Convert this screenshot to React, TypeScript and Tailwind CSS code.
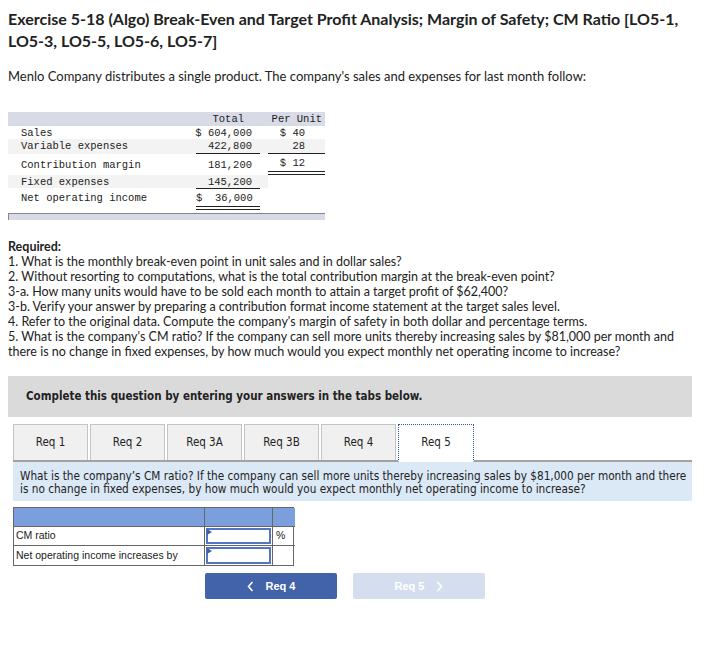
import React from 'react';

const mono = "font-['Liberation_Mono',monospace]";
const tahoma = "font-['DejaVu_Sans_Condensed','DejaVu_Sans',sans-serif]";
const arial = "font-['Liberation_Sans',Arial,sans-serif]";

const Chevron = ({ dir }: { dir: 'left' | 'right' }) => (
    <svg width="7" height="11" viewBox="0 0 7 11" fill="none" stroke="currentColor" strokeWidth={1.6}>
        {dir === 'left' ? <path d="M5.5 1L1.5 5.5L5.5 10" /> : <path d="M1.5 1L5.5 5.5L1.5 10" />}
    </svg>
);

const InputCell = () => (
    <div className="relative h-full p-px">
        <div className="h-full border-2 border-[#5276c2] bg-white" />
        <span className="absolute left-[2px] top-[2px] h-0 w-0 border-t-[3px] border-b-[3px] border-l-[5px] border-t-transparent border-b-transparent border-l-[#3b5fb0]" />
    </div>
);

export default function App() {
    const tabs = ['Req 1', 'Req 2', 'Req 3A', 'Req 3B', 'Req 4', 'Req 5'];

    return (
        <div className="w-[715px] min-h-[652px] bg-white px-2 pt-[8px] text-[#222]">
            <h1 className="font-['Lato',sans-serif] text-[16px] font-bold leading-[22px]">
                Exercise 5-18 (Algo) Break-Even and Target Profit Analysis; Margin of Safety; CM Ratio [LO5-1, LO5-3, LO5-5, LO5-6, LO5-7]
            </h1>
            <p className="mt-[15px] font-['Lato',sans-serif] text-[13px] leading-[18px]">
                Menlo Company distributes a single product. The company's sales and expenses for last month follow:
            </p>

            {/* income statement */}
            <div className={`mt-[27px] w-[317px] ${mono} text-[10.5px] leading-[12px]`}>
                <div className="grid h-[14px] grid-cols-[185px_67px_8px_57px] items-center bg-[#d8dbe6]">
                    <div />
                    <div className="pr-[16px] text-right">Total</div>
                    <div />
                    <div className="pr-[3px] text-right">Per Unit</div>
                </div>
                <div className="grid h-[13px] grid-cols-[185px_67px_8px_57px] items-center">
                    <div className="pl-[13px]">Sales</div>
                    <div className="whitespace-pre pr-[8px] text-right">$ 604,000</div>
                    <div />
                    <div className="whitespace-pre pr-[20px] text-right">$ 40</div>
                </div>
                <div className="grid h-[15px] grid-cols-[185px_67px_8px_57px] bg-[#f3f3f3]">
                    <div className="pl-[13px] pt-px">Variable expenses</div>
                    <div className="ml-[3px] border-b border-[#222] pr-[8px] pt-px text-right">422,800</div>
                    <div />
                    <div className="border-b border-[#222] pr-[20px] pt-px text-right">28</div>
                </div>
                <div className="grid h-[21px] grid-cols-[185px_67px_8px_57px] items-start">
                    <div className="pl-[13px] pt-[5px]">Contribution margin</div>
                    <div className="pr-[8px] pt-[5px] text-right">181,200</div>
                    <div />
                    <div className="h-[21px] border-b-[4px] border-double border-[#222] pr-[20px] pt-[3px] text-right whitespace-pre">$ 12</div>
                </div>
                <div className="grid h-[13px] grid-cols-[185px_67px_8px_57px] bg-[#f3f3f3]">
                    <div className="pl-[13px] pt-px">Fixed expenses</div>
                    <div className="ml-[3px] border-b border-[#222] pr-[8px] pt-px text-right">145,200</div>
                    <div />
                    <div className="bg-white" />
                </div>
                <div className="grid h-[22px] grid-cols-[185px_67px_8px_57px] items-start">
                    <div className="pl-[13px] pt-[4px]">Net operating income</div>
                    <div className="ml-[3px] h-[22px] whitespace-pre border-b-[4px] border-double border-[#222] pr-[8px] pt-[4px] text-right">$  36,000</div>
                    <div />
                    <div />
                </div>
                <div className="mt-[3px] h-[7px] border-l border-t border-[#888] bg-[#d8dbe6]" />
            </div>

            {/* required */}
            <div className="mt-[19px] w-[690px] font-['Lato',sans-serif] text-[12.5px] leading-[15px]">
                <p className="font-bold">Required:</p>
                <p>1. What is the monthly break-even point in unit sales and in dollar sales?</p>
                <p>2. Without resorting to computations, what is the total contribution margin at the break-even point?</p>
                <p>3-a. How many units would have to be sold each month to attain a target profit of $62,400?</p>
                <p>3-b. Verify your answer by preparing a contribution format income statement at the target sales level.</p>
                <p>4. Refer to the original data. Compute the company's margin of safety in both dollar and percentage terms.</p>
                <p>
                    5. What is the company's CM ratio? If the company can sell more units thereby increasing sales by $81,000 per month and there is no change in fixed expenses, by how much would you expect monthly net operating income to increase?
                </p>
            </div>

            {/* instructions */}
            <div className={`mt-[17px] flex h-[41px] w-[684px] items-center bg-[#dadada] pl-[18px] ${tahoma} text-[11.5px] font-bold`}>
                Complete this question by entering your answers in the tabs below.
            </div>

            <div className="ml-[5px] w-[679px]">
                <div className={`mt-[7px] flex gap-[2px] border-b-2 border-[#a3a3a3] ${tahoma} text-[11.5px]`}>
                    {tabs.map((t, i) =>
                        i === 5 ? (
                            <div key={t} className="-mb-[2px] flex h-[38px] w-[76px] items-center justify-center border border-dotted border-[#3355aa] border-b-white bg-white">
                                {t}
                            </div>
                        ) : (
                            <div key={t} className="flex h-[36px] w-[75px] items-center justify-center border border-[#c4c4c4] border-b-0 bg-[#f0f0f0]">
                                {t}
                            </div>
                        )
                    )}
                </div>
                <div className={`h-[39px] bg-[#dbe8f6] pl-[7px] pt-[8px] ${tahoma} text-[11.7px] leading-[13px]`}>
                    What is the company’s CM ratio? If the company can sell more units thereby increasing sales by $81,000 per month and there is no change in fixed expenses, by how much would you expect monthly net operating income to increase?
                </div>

                {/* answer table */}
                <div className={`mt-[6px] grid w-[281px] grid-cols-[191px_68px_22px] grid-rows-[19px_19px_19px] border border-[#666] ${arial} text-[10.5px]`}>
                    <div className="border-b border-r border-[#666] bg-[#7b9fdc]" />
                    <div className="border-b border-r border-[#666] bg-[#7b9fdc]" />
                    <div className="border-b border-[#666] bg-[#7b9fdc]" />
                    <div className="flex items-center border-b border-r border-[#666] pl-[2px]">CM ratio</div>
                    <div className="border-b border-r border-[#666]"><InputCell /></div>
                    <div className="flex items-center border-b border-[#666] pl-[3px]">%</div>
                    <div className="flex items-center border-r border-[#666] pl-[2px]">Net operating income increases by</div>
                    <div className="border-r border-[#666]"><InputCell /></div>
                    <div />
                </div>

                <div className={`mt-[7px] flex gap-[16px] pl-[192px] ${arial} text-[11px] font-bold`}>
                    <button className="flex h-[26px] w-[132px] items-center justify-center gap-[12px] rounded-[2px] bg-[#4262aa] text-white">
                        <Chevron dir="left" />
                        <span>Req 4</span>
                    </button>
                    <button className="flex h-[26px] w-[132px] items-center justify-center gap-[12px] rounded-[2px] bg-[#d5deee] text-white">
                        <span>Req 5</span>
                        <Chevron dir="right" />
                    </button>
                </div>
            </div>
        </div>
    );
}
